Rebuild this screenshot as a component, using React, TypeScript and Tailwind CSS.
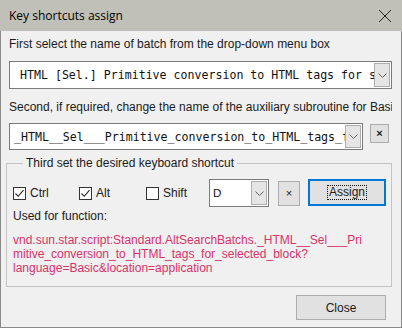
import React from "react";

function Chevron() {
  return (
    <svg width="9" height="5" viewBox="0 0 9 5" fill="none" stroke="#606060" strokeWidth={1}>
      <path d="M0.5 0.5 L4.5 4.5 L8.5 0.5" />
    </svg>
  );
}

function Check({ checked }: { checked: boolean }) {
  return (
    <span className="w-[13px] h-[13px] border border-[#333333] bg-white flex items-center justify-center shrink-0">
      {checked && (
        <svg width="11" height="11" viewBox="0 0 11 11" fill="none" stroke="#222" strokeWidth={1.1}>
          <path d="M1.5 5.5 L4.2 8.3 L9.5 2.2" />
        </svg>
      )}
    </span>
  );
}

function Combo({ value, className, pad }: { value: string; className: string; pad: string }) {
  return (
    <div className={`flex items-stretch bg-white border border-[#7a7a7a] overflow-hidden ${className}`}>
      <div className={`flex-1 min-w-0 flex items-center overflow-hidden whitespace-nowrap font-['DejaVu_Sans_Mono',monospace] text-[11.6px] text-[#111] ${pad}`}>
        {value}
      </div>
      <div className="w-[16px] my-[1px] mr-[1px] bg-[#e5e5e5] border border-[#adadad] flex items-center justify-center shrink-0">
        <Chevron />
      </div>
    </div>
  );
}

export default function App() {
  return (
    <div className="w-[402px] h-[328px] bg-[#f0f0f0] border border-[#8a8a8a] border-t-0 flex flex-col font-['Liberation_Sans',Arial,sans-serif] text-[12px] leading-[14px] text-[#1a1a1a]">
      {/* Title bar */}
      <div className="h-[31px] -mx-[1px] bg-[#c0c0b8] flex items-center justify-between pl-[9px] pr-[10px] shrink-0">
        <span className="font-['Open_Sans',sans-serif] text-[12px] text-black">Key shortcuts assign</span>
        <svg width="14" height="14" viewBox="0 0 14 14" fill="none" stroke="#222" strokeWidth={1}>
          <path d="M1 1 L13 13 M13 1 L1 13" />
        </svg>
      </div>

      <div className="flex flex-col pl-[8px] pr-[9px] pt-[6px]">
        <div>First select the name of batch from the drop-down menu box</div>

        <Combo
          className="mt-[10px] h-[28px]"
          pad="pl-[10px]"
          value="HTML [Sel.] Primitive conversion to HTML tags for selected block"
        />

        <div className="mt-[11px] whitespace-nowrap overflow-hidden">
          Second, if required, change the name of the auxiliary subroutine for Basic
        </div>

        <div className="mt-[9px] flex items-start">
          <Combo
            className="w-[354px] h-[27px]"
            pad="pl-[4px]"
            value="_HTML__Sel___Primitive_conversion_to_HTML_tags_for_selected_block"
          />
          <button className="ml-[7px] mt-[1px] w-[19px] h-[19px] bg-[#e1e1e1] border border-[#adadad] flex items-center justify-center text-[11px] font-bold leading-none">
            ×
          </button>
        </div>

        <fieldset className="mt-[6px] -ml-[3px] border border-[#c4c4c4] pl-[6px] pr-[5px] pb-[11px]">
          <legend className="ml-[10px] px-[3px]">Third set the desired keyboard shortcut</legend>

          <div className="mt-[9px] flex items-start">
            <div className="w-[66px] h-[28px] flex items-center gap-[4px]">
              <Check checked />
              <span>Ctrl</span>
            </div>
            <div className="w-[67px] h-[28px] flex items-center gap-[4px]">
              <Check checked />
              <span>Alt</span>
            </div>
            <div className="w-[63px] h-[28px] flex items-center gap-[4px]">
              <Check checked={false} />
              <span>Shift</span>
            </div>
            <Combo className="w-[60px] h-[28px]" pad="pl-[3px] font-['Liberation_Sans',sans-serif]" value="D" />
            <button className="ml-[9px] mt-[2px] w-[22px] h-[25px] bg-[#e1e1e1] border border-[#adadad] flex items-center justify-center text-[11px] leading-none">
              ×
            </button>
            <button className="ml-[8px] w-[78px] h-[27px] bg-[#e1e1e1] border-2 border-[#0078d7] flex items-center justify-center">
              <span className="border border-dotted border-[#111] px-[1px] leading-[13px]">Assign</span>
            </button>
          </div>

          <div className="mt-[2px]">Used for function:</div>

          <div className="mt-[10px] text-[#d6336b] whitespace-nowrap">
            <div>vnd.sun.star.script:Standard.AltSearchBatchs._HTML__Sel___Pri</div>
            <div>mitive_conversion_to_HTML_tags_for_selected_block?</div>
            <div>language=Basic&amp;location=application</div>
          </div>
        </fieldset>

        <div className="mt-[8px] flex justify-end pr-[6px]">
          <button className="w-[90px] h-[25px] bg-[#e1e1e1] border border-[#adadad] text-[#1a1a1a]">Close</button>
        </div>
      </div>
    </div>
  );
}
